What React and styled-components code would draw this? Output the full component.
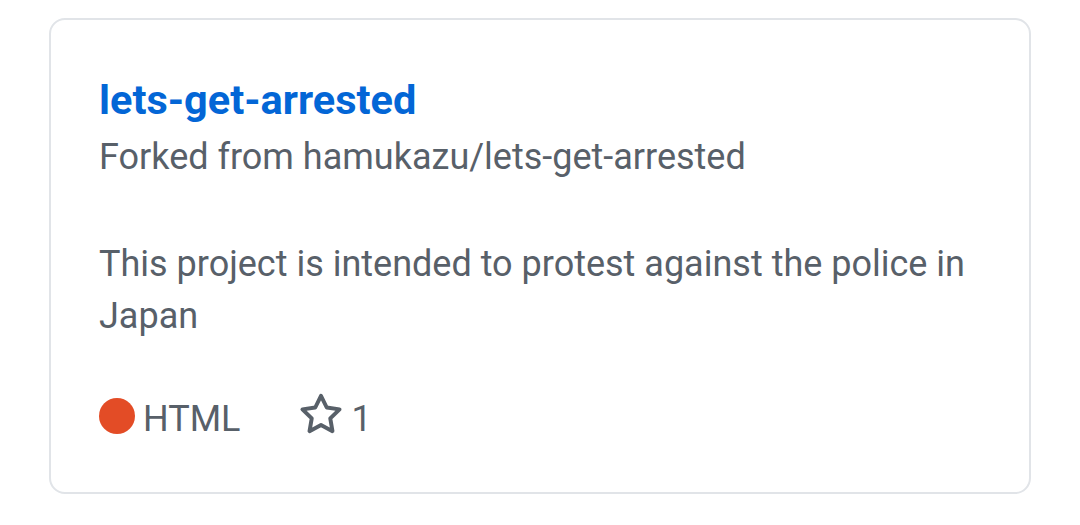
import React from 'react';
import styled, { createGlobalStyle } from 'styled-components';

const GlobalStyle = createGlobalStyle`
  html, body {
    margin: 0;
    padding: 0;
    background: #ffffff;
    font-family: Roboto, "Liberation Sans", sans-serif;
  }
`;

const Page = styled.div`
  width: 1080px;
  height: 525px;
  padding: 18px 49px 0 49px;
  box-sizing: border-box;
`;

const Card = styled.div`
  box-sizing: border-box;
  width: 982px;
  height: 476px;
  border: 2.5px solid #e1e4e8;
  border-radius: 16px;
  padding: 56px 50px 0 48px;
  display: flex;
  flex-direction: column;
  align-items: flex-start;
`;

const Title = styled.a`
  color: #0366d6;
  font-weight: 700;
  font-size: 41.5px;
  line-height: 48px;
  text-decoration: none;
`;

const Meta = styled.div`
  color: #586069;
  font-size: 36px;
  line-height: 44px;
  margin-top: 11px;
`;

const Description = styled.p`
  color: #586069;
  font-size: 36px;
  line-height: 52px;
  margin: 59px 0 0 0;
`;

const Footer = styled.div`
  display: flex;
  align-items: center;
  margin-top: 48px;
  color: #586069;
  font-size: 36px;
  line-height: 44px;
`;

const Stat = styled.span`
  display: flex;
  align-items: center;
  gap: ${(p) => p.gap || 8}px;
  margin-right: ${(p) => p.spacing || 0}px;
`;

const Dot = styled.span`
  width: 36px;
  height: 36px;
  margin-bottom: 6px;
  border-radius: 50%;
  background: ${(p) => p.color};
  display: inline-block;
  flex-shrink: 0;
`;

const StarIcon = styled.svg`
  width: 50px;
  height: 50px;
  margin-bottom: 7px;
  flex-shrink: 0;
`;

const Star = () => (
  <StarIcon viewBox="0 0 24 24" fill="none" stroke="#586069" strokeWidth="1.9" strokeLinejoin="round">
    <path d="M12 2.8l2.75 5.6 6.15.9-4.45 4.33 1.05 6.12L12 16.85l-5.5 2.9 1.05-6.12L3.1 9.3l6.15-.9z" />
  </StarIcon>
);

export default function App() {
  return (
    <>
      <GlobalStyle />
      <Page>
        <Card>
          <Title href="#">lets-get-arrested</Title>
          <Meta>Forked from hamukazu/lets-get-arrested</Meta>
          <Description>This project is intended to protest against the police in Japan</Description>
          <Footer>
            <Stat gap={8} spacing={56}>
              <Dot color="#e34c26" />
              HTML
            </Stat>
            <Stat gap={5}>
              <Star />
              1
            </Stat>
          </Footer>
        </Card>
      </Page>
    </>
  );
}
